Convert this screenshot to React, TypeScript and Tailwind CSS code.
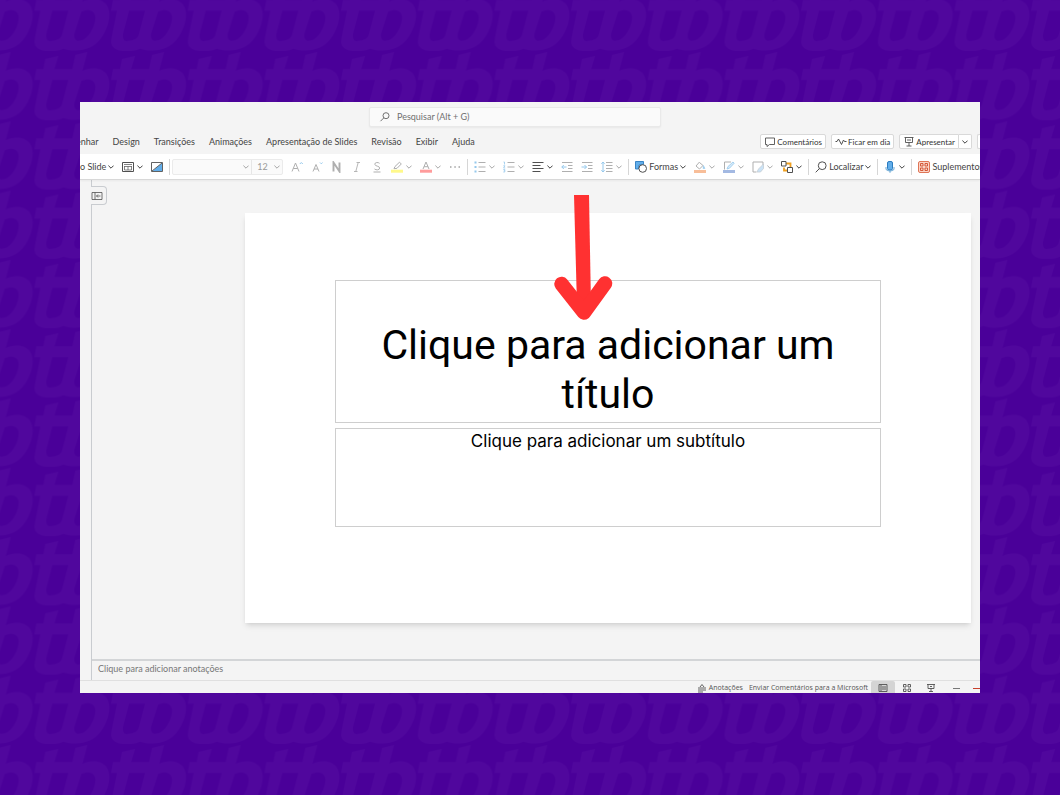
import React from 'react';
import clsx from 'clsx';

const tabs = ['Design', 'Transições', 'Animações', 'Apresentação de Slides', 'Revisão', 'Exibir', 'Ajuda'];

type IconProps = { children: React.ReactNode; faded?: boolean };

const Icon: React.FC<IconProps> = ({ children, faded }) => (
  <svg
    viewBox="0 0 12 12"
    className={clsx('size-3 shrink-0', faded && 'opacity-45')}
    fill="none"
    stroke="#505050"
    aria-hidden="true"
  >
    {children}
  </svg>
);

const Chevron = ({ faded }: { faded?: boolean }) => (
  <svg
    viewBox="0 0 6 4"
    className={clsx('h-1 w-1.5 shrink-0', faded && 'opacity-45')}
    fill="none"
    stroke="#404040"
    aria-hidden="true"
  >
    <path d="M.4.6 3 3.2 5.6.6" />
  </svg>
);

const Separator = () => <span className="-mx-0.5 h-4 w-px shrink-0 bg-[#d6d6d6]" />;

type ToolProps = { label: string; text?: string; menu?: boolean; faded?: boolean; children?: React.ReactNode };

const Tool: React.FC<ToolProps> = ({ label, text, menu, faded, children }) => (
  <button
    type="button"
    aria-label={label}
    className={clsx('flex shrink-0 items-center whitespace-nowrap', text ? 'gap-0.5' : 'gap-[3px]')}
  >
    {children && <Icon faded={faded}>{children}</Icon>}
    {text}
    {menu && <Chevron faded={faded} />}
  </button>
);

const Background = () => (
  <svg className="absolute inset-0 size-full" aria-hidden="true">
    <defs>
      <pattern id="brand" width="76.67" height="69.3" x="33.4" y="51" patternUnits="userSpaceOnUse">
        <path
          fill="#50079d"
          fillRule="evenodd"
          d="M12 8 25 5 21 18H39L42 4 54 1 49 20C56 16 68 16 73 23 79 31 75 46 68 56 59 69 43 71 30 67 20 71 11 70 5 67 0 64 1 59 2 54L7 29H1L3 18H10ZM19 29 13 52C12 60 16 60 20 59 26 58 28 56 29 52L35 29ZM48 30 41 52C40 60 45 60 50 58 57 54 62 44 62 36 62 28 54 27 48 30Z"
        />
      </pattern>
    </defs>
    <rect width="100%" height="100%" fill="url(#brand)" />
  </svg>
);

const SearchBar = () => (
  <div className="pt-[5px] pl-[289px]">
    <label className="flex h-5 w-[292px] items-center gap-1.5 rounded-xs border border-[#e9e9e9] bg-[#fafafa] px-[9px] shadow-xs">
      <Icon>
        <circle cx="7" cy="4.7" r="3" strokeWidth=".8" />
        <path d="M4.8 6.9 1.5 10.2" strokeWidth=".8" />
      </Icon>
      <input
        type="search"
        aria-label="Pesquisar"
        placeholder="Pesquisar (Alt + G)"
        className="min-w-0 flex-1 bg-transparent placeholder:text-[#707070] focus:outline-none"
      />
    </label>
  </div>
);

const actionClass =
  'flex h-[15px] items-center gap-px rounded-xs border border-[#d9d9d9] bg-white px-[3px] text-[8px] whitespace-nowrap text-[#333]';

const TabBar = () => (
  <div className="flex h-[27px] items-center pt-0.5">
    <nav className="-ml-1 flex gap-[14px] whitespace-nowrap">
      <a href="#desenhar">enhar</a>
      {tabs.map(tab => (
        <a key={tab} href={`#${tab}`}>{tab}</a>
      ))}
    </nav>
    <div className="ml-auto flex gap-[5px]">
      <button type="button" className={actionClass}>
        <Icon><path d="M1.5 2H10.5V8.5H5.5L3 10.5V8.5H1.5Z" strokeWidth=".9" /></Icon>
        Comentários
      </button>
      <button type="button" className={actionClass}>
        <Icon><path d="M.5 5.5H2L3.5 3 6.5 8.5 8.5 4 9.5 5.5H11.5" /></Icon>
        Ficar em dia
      </button>
      <div className="flex">
        <button type="button" className={clsx(actionClass, 'rounded-r-none')}>
          <Icon><path d="M1.5 1.5H10.5M2.5 1.5V6.5H9.5V1.5M4 4H8M6 6.5V10M3.5 10H8.5" strokeWidth=".9" /></Icon>
          Apresentar
        </button>
        <button
          type="button"
          aria-label="Opções de apresentação"
          className="flex h-[15px] w-[13px] items-center justify-center rounded-r-xs border border-l-0 border-[#d9d9d9] bg-white"
        >
          <Chevron />
        </button>
      </div>
      <span className="h-[15px] w-[3px] rounded-l-xs border border-r-0 border-[#d9d9d9] bg-white" />
    </div>
  </div>
);

const Toolbar = () => (
  <div className="relative z-10 flex h-[26px] items-center gap-2 border-b border-[#d8d8d8] bg-white shadow-xs">
    <Tool label="Novo Slide" text="o Slide" menu />
    <Tool label="Layout" menu>
      <path d="M.5 1.5H11.5V10.5H.5Z" />
      <path d="M2 3.5H10M2 5.5H10M6 5.5V9M2.5 5.5V9H9.5V5.5" strokeWidth=".7" />
    </Tool>
    <Tool label="Designer">
      <path d="M11 2V10H1.5Z" fill="#62aeea" stroke="none" />
      <path d="M.5 1.5H11.5V10.5H.5ZM1 10 11 2" strokeWidth=".9" />
    </Tool>
    <Separator />
    <div className="-ml-1 flex h-4 shrink-0 rounded-xs border border-[#ebebeb] bg-[#fafafa]">
      <label className="relative flex items-center">
        <select aria-label="Fonte" disabled className="h-full w-[78px] appearance-none" />
        <span className="absolute right-0.5 flex"><Chevron faded /></span>
      </label>
      <label className="relative flex items-center border-l border-[#e6e6e6]">
        <select aria-label="Tamanho da fonte" disabled className="h-full w-[30px] appearance-none pl-[5px] text-[#999]">
          <option>12</option>
        </select>
        <span className="absolute right-0.5 flex"><Chevron faded /></span>
      </label>
    </div>
    <Tool label="Aumentar fonte" faded>
      <path d="M1 10.5 4.5 2 8 10.5M2.3 7.5H6.7" />
      <path d="M8.8 3 10.3 1.5 11.8 3" stroke="#1688d8" />
    </Tool>
    <Tool label="Diminuir fonte" faded>
      <path d="M2 10.5 5 3.5 8 10.5M3 8H7" />
      <path d="M9 1.5 10.3 2.8 11.6 1.5" stroke="#1688d8" />
    </Tool>
    <Tool label="Negrito" faded>
      <path d="M2.5 10.5V1.5L8.5 10.5V1.5" strokeWidth="1.9" />
    </Tool>
    <Tool label="Itálico" faded>
      <path d="M7.2 1.5 4.8 10.5M5.5 1.5H9M3 10.5H6.5" strokeWidth=".9" />
    </Tool>
    <Tool label="Sublinhado" faded>
      <path d="M8.5 2.3C7.5 1.2 3.8 1 3.8 3.2 3.8 5.5 8.7 4.8 8.7 7 8.7 9.3 5 9.3 3.5 8M2.5 11H9.5" />
    </Tool>
    <Tool label="Realce" menu faded>
      <path d="M3 7.5 4 5.5 8.5 1.2 10.3 3 6 7.3 3 7.7Z" />
      <path d="M0 10.2H12" stroke="#fff200" strokeWidth="3" />
    </Tool>
    <Tool label="Cor da fonte" menu faded>
      <path d="M3 8 6 1 9 8M4 5.7H8" />
      <path d="M0 10.2H12" stroke="#ff2525" strokeWidth="3" />
    </Tool>
    <Tool label="Mais opções de fonte">
      <path d="M1 6H2.5M5.3 6H6.8M9.5 6H11" stroke="#777" strokeWidth="1.2" />
    </Tool>
    <Separator />
    <Tool label="Marcadores" menu faded>
      <path d="M4.5 1.5H11.5M4.5 6H11.5M4.5 10.5H11.5" />
      <path d="M.5 1.5H2.5M.5 6H2.5M.5 10.5H2.5" stroke="#1688d8" strokeWidth="1.8" />
    </Tool>
    <Tool label="Numeração" menu faded>
      <path d="M4.5 1.5H11.5M4.5 6H11.5M4.5 10.5H11.5" />
      <path d="M.5 1H1.5V3.5M.3 4.8H2L.6 7H2.2M.3 8.5H1.8V11H.3M.8 9.7H1.8" stroke="#1688d8" strokeWidth=".8" />
    </Tool>
    <Tool label="Alinhar" menu>
      <path d="M.5 1.5H11.5M.5 4.5H8.5M.5 7.5H11.5M.5 10.5H8.5" />
    </Tool>
    <Tool label="Diminuir recuo" faded>
      <path d="M1 1.5H11.5M7 4.5H11.5M7 7.5H11.5M1 10.5H11.5" />
      <path d="M5.5 6H.8M2.8 4 .8 6 2.8 8" stroke="#1688d8" />
    </Tool>
    <Tool label="Aumentar recuo" faded>
      <path d="M1 1.5H11.5M7 4.5H11.5M7 7.5H11.5M1 10.5H11.5" />
      <path d="M.5 6H5.5M3.5 4 5.5 6 3.5 8" stroke="#1688d8" />
    </Tool>
    <Tool label="Espaçamento" menu faded>
      <path d="M5 1.5H11.5M5 4.5H11.5M5 7.5H11.5M5 10.5H11.5" />
      <path d="M2 1V11M.4 2.8 2 1 3.6 2.8M.4 9.2 2 11 3.6 9.2" stroke="#1688d8" />
    </Tool>
    <Separator />
    <Tool label="Formas" text="Formas" menu>
      <path d="M.5.5H8.5V3.5L4 4 3.5 8H.5Z" fill="#62aeea" stroke="#2b7cc0" strokeWidth=".9" />
      <circle cx="7.7" cy="7.5" r="3.8" fill="#fff" />
    </Tool>
    <Tool label="Preenchimento" menu faded>
      <path d="M5.5 1 2 5 5.5 8 9 4.5 5.5 1.5" />
      <path d="M9.5 4.5 11 7.5H9Z" fill="#1688d8" stroke="#1688d8" strokeWidth=".5" />
      <path d="M0 10.5H12" stroke="#f07020" strokeWidth="3" />
    </Tool>
    <Tool label="Contorno" menu faded>
      <path d="M8 1H1.5V8.5" />
      <path d="M4 8 5 5.5 10 1 11.2 2.2 6.5 7.2Z" stroke="#1688d8" fill="#a8d2f2" strokeWidth=".8" />
      <path d="M0 10.5H12" stroke="#3565c0" strokeWidth="3" />
    </Tool>
    <Tool label="Efeitos" menu faded>
      <path d="M4.5 11H1V1H11V4" />
      <path d="M5 11 6.5 8 11.5 3V7.5L8.5 11Z" stroke="#8090a0" fill="#8bc3ee" strokeWidth=".8" />
    </Tool>
    <Tool label="Organizar" menu>
      <path d="M5 2.5H9.5V6.5M3 6.5V9.5H6" stroke="#f0a020" strokeWidth="1.8" />
      <path d="M.5.5H5V5H.5ZM6.5 6.5H11.5V11.5H6.5Z" fill="#fff" />
    </Tool>
    <Separator />
    <Tool label="Localizar" text="Localizar" menu>
      <circle cx="7.2" cy="4.7" r="3.9" />
      <path d="M4.5 7.5.7 11.3" />
    </Tool>
    <Separator />
    <Tool label="Ditar" menu>
      <rect x="3.5" y=".5" width="5" height="8.5" rx="1.5" fill="#62aeea" stroke="#2b7cc0" />
      <path d="M2 6V8C2 10.500 10 10.500 10 8V6M6 10V11.8" stroke="#5b9fd0" strokeWidth=".9" />
    </Tool>
    <Separator />
    <Tool label="Suplementos" text="Suplementos">
      <rect x=".5" y=".5" width="11" height="11" rx="1.5" fill="#fbd5c8" stroke="#df7556" />
      <path d="M2.5 2.5H5V5H2.5ZM7 2.5H9.5V5H7ZM2.5 7H5V9.5H2.5ZM7 7H9.5V9.5H7Z" stroke="#cf4d2a" strokeWidth=".9" />
    </Tool>
  </div>
);

const Arrow = () => (
  <svg viewBox="0 0 60 126" className="absolute -top-[19px] left-[308px] h-[126px] w-[60px]" aria-hidden="true">
    <path d="M21 1H36L38 112H24Z" fill="#ff3131" />
    <path
      d="M8.5 90 31 118.5 52 89.5"
      fill="none"
      stroke="#ff3131"
      strokeWidth="14.5"
      strokeLinecap="round"
      strokeLinejoin="round"
    />
  </svg>
);

const Slide = () => (
  <section className="relative flex aspect-video w-full flex-col gap-[5px] bg-white px-[90px] pt-[67px] pb-24 text-black shadow-md">
    <div className="flex h-[143px] items-end justify-center border border-[#cecece] px-7 pb-[3px]">
      <h1 className="text-center font-[Roboto,sans-serif] text-[41px] leading-[49px]">Clique para adicionar um título</h1>
    </div>
    <div className="h-[99px] border border-[#cecece]">
      <p className="text-center font-[Inter,sans-serif] text-[17px] leading-6">Clique para adicionar um subtítulo</p>
    </div>
    <Arrow />
  </section>
);

const StatusIcon = ({ d }: { d: string }) => (
  <svg viewBox="0 0 10 10" className="size-2.5" fill="none" stroke="#505050" strokeWidth=".9" aria-hidden="true">
    <path d={d} />
  </svg>
);

const StatusBar = () => (
  <footer className="flex h-[13px] items-start justify-end overflow-hidden border-t border-[#e0e0e0] font-['Open_Sans',sans-serif] text-[7px] leading-[14px] whitespace-nowrap text-[#555]">
    <button type="button" className="mr-1.5 flex h-[14px] items-center gap-0.5">
      <StatusIcon d="M3 4 5 1.5 7 4M1 5H9M1 7H9M1 9H6" />
      Anotações
    </button>
    <button type="button">Enviar Comentários para a Microsoft</button>
    <button type="button" aria-label="Normal" className="ml-[3px] flex h-[14px] w-6 items-center justify-center rounded-t-xs bg-[#d4d4d4]">
      <StatusIcon d="M1 1.5H9V8.5H1ZM3 2V8M4 4H8M4 6H8" />
    </button>
    <button type="button" aria-label="Classificação de slides" className="flex h-[14px] w-6 items-center justify-center">
      <StatusIcon d="M1.5 1.5H4V4H1.5ZM6 1.5H8.5V4H6ZM1.5 6H4V8.5H1.5ZM6 6H8.5V8.5H6Z" />
    </button>
    <button type="button" aria-label="Apresentação" className="flex h-[14px] w-6 items-center justify-center">
      <StatusIcon d="M1 1.5H9M2 1.5V5.5H8V1.5M4 3.5H6M5 5.5V8.5M3 8.5H7" />
    </button>
    <button type="button" aria-label="Reduzir" className="flex h-[14px] w-[26px] items-center justify-center">
      <span className="h-px w-[7px] bg-[#777]" />
    </button>
    <span className="ml-1 flex h-[14px] w-[7px] items-center">
      <span className="h-px w-full bg-[#c8402c]" />
    </span>
  </footer>
);

const App: React.FC = () => {
  return (
    <div className="relative flex min-h-screen flex-col bg-[#4a0099] px-20 py-[102px] font-[Lato,sans-serif] text-[9px] text-[#444]">
      <Background />
      <main className="relative flex flex-1 flex-col overflow-hidden bg-[#f4f4f4]">
        <SearchBar />
        <TabBar />
        <Toolbar />
        <div className="flex flex-1 pl-[11px]">
          <div className="relative flex min-w-0 flex-1 flex-col border-l border-[#c9ccd0]">
            <button
              type="button"
              aria-label="Mostrar miniaturas"
              className="absolute top-1.5 -left-px flex h-[19px] w-4 items-center rounded-r-sm border border-l-0 border-[#c9ccd0] bg-[#f4f4f4]"
            >
              <Icon><path d="M1 2.5H11V9.5H1ZM4 2.5V9.5M9.5 6H5.5M7 4.5 5.5 6 7 7.5" strokeWidth=".8" /></Icon>
            </button>
            <div className="flex-1 pt-[33px] pr-[9px] pb-9 pl-[153px]">
              <Slide />
            </div>
            <input
              type="text"
              aria-label="Anotações"
              placeholder="Clique para adicionar anotações"
              className="h-[21px] border-t-2 border-[#d3d5d7] px-1.5 pb-1 placeholder:text-[#777] focus:outline-none"
            />
          </div>
        </div>
        <StatusBar />
      </main>
    </div>
  );
};

export default App;
